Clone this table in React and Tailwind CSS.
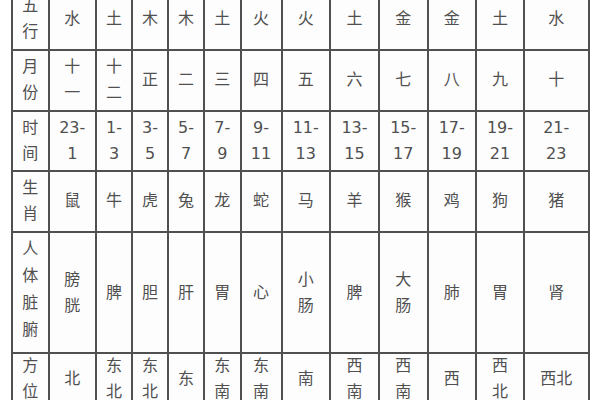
import React from "react";

const rows = [
  [["五", "行"], ["水"], ["土"], ["木"], ["木"], ["土"], ["火"], ["火"], ["土"], ["金"], ["金"], ["土"], ["水"]],
  [["月", "份"], ["十", "一"], ["十", "二"], ["正"], ["二"], ["三"], ["四"], ["五"], ["六"], ["七"], ["八"], ["九"], ["十"]],
  [["时", "间"], ["23-", "1"], ["1-", "3"], ["3-", "5"], ["5-", "7"], ["7-", "9"], ["9-", "11"], ["11-", "13"], ["13-", "15"], ["15-", "17"], ["17-", "19"], ["19-", "21"], ["21-", "23"]],
  [["生", "肖"], ["鼠"], ["牛"], ["虎"], ["兔"], ["龙"], ["蛇"], ["马"], ["羊"], ["猴"], ["鸡"], ["狗"], ["猪"]],
  [["人", "体", "脏", "腑"], ["膀", "胱"], ["脾"], ["胆"], ["肝"], ["胃"], ["心"], ["小", "肠"], ["脾"], ["大", "肠"], ["肺"], ["胃"], ["肾"]],
  [["方", "位"], ["北"], ["东", "北"], ["东", "北"], ["东"], ["东", "南"], ["东", "南"], ["南"], ["西", "南"], ["西", "南"], ["西"], ["西", "北"], ["西北"]],
];

export default function App() {
  return (
    <div
      className="w-[600px] h-[400px] overflow-hidden bg-white"
      style={{ fontFamily: '"DejaVu Sans", "Noto Sans CJK SC", sans-serif' }}
    >
      <div className="ml-[11px] mt-[-12.5px] grid w-max p-[2px] gap-[2px] bg-[#505050] grid-cols-[34.5px_45.5px_34px_34px_34px_34.5px_39px_46.5px_47px_46.5px_46.5px_46px_62.5px] grid-rows-[59px_59px_58px_59.5px_119px_50px]">
        {rows.map((row, ri) =>
          row.map((lines, ci) => (
            <div
              key={ri + "-" + ci}
              className={
                "bg-[#fdfdfd] flex flex-col items-center justify-center text-[16px] text-[#505050] " +
                (ri === 4 && ci === 0 ? "leading-[27px] pb-[8px]" : "leading-[26px]")
              }
            >
              {lines.map((l, li) => (
                <span key={li} className="whitespace-nowrap">
                  {l}
                </span>
              ))}
            </div>
          ))
        )}
      </div>
    </div>
  );
}
